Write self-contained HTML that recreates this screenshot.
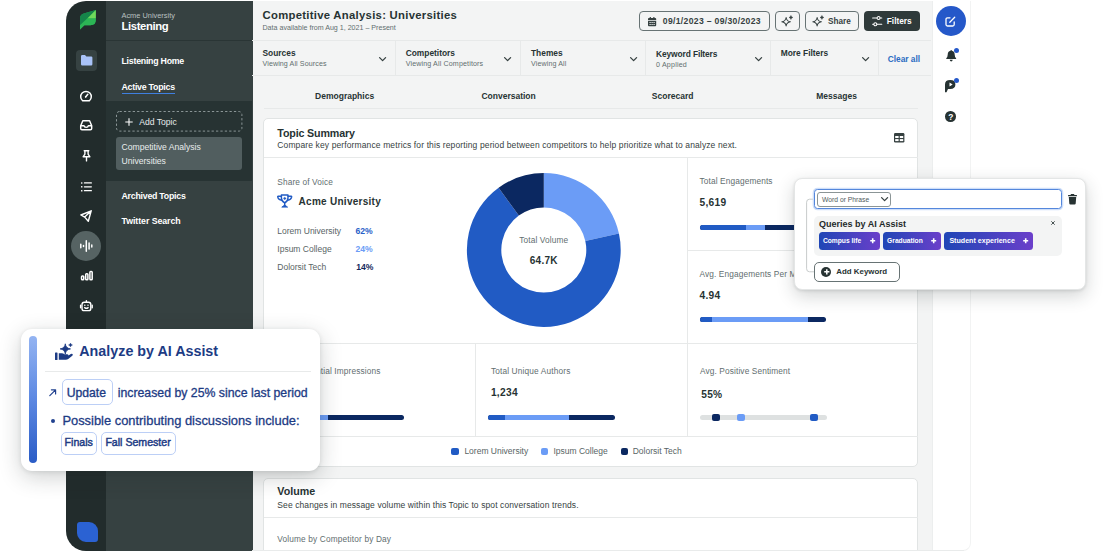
<!DOCTYPE html>
<html lang="en">
<head>
<meta charset="utf-8">
<title>Competitive Analysis: Universities</title>
<style>
*{box-sizing:border-box;margin:0;padding:0}
html,body{width:1120px;height:553px;overflow:hidden;background:#fff}
body{position:relative;font-family:"Liberation Sans",Arial,sans-serif;color:#273333;-webkit-font-smoothing:antialiased}
.a{position:absolute}
.t{position:absolute;white-space:nowrap;line-height:1;transform:translateY(-50%)}
.b{font-weight:700}
.c{transform:translate(-50%,-50%)}
.w{color:#fff}
.g{color:#626e6f;letter-spacing:.12px}
svg{position:absolute;overflow:visible}
.ln{position:absolute;background:#e7e9e9}
.card{position:absolute;background:#fff;border:1px solid #e1e4e4;border-radius:5px}
.bar{position:absolute;height:5px;border-radius:3px;overflow:hidden;background:#0b2861}
.bar i{position:absolute;top:0;bottom:0}
.btn{position:absolute;border:1px solid #677374;border-radius:4px}
.chip{position:absolute;top:232.2px;height:17.8px;border-radius:3.5px;background:linear-gradient(90deg,#1f46b6,#6b3fca)}
.tag{position:absolute;border:1px solid #bccff6;border-radius:5px;background:#fff}
.nv{color:#1d3b84}
</style>
</head>
<body>

<!-- ===== window backgrounds ===== -->
<div class="a" id="rail" style="left:66px;top:1px;width:40.2px;height:550px;background:#222c2c;border-radius:20px 0 0 20px"></div>
<div class="a" id="nav" style="left:106px;top:1px;width:146.7px;height:550px;background:#364141"></div>
<div class="a" id="main" style="left:252.7px;top:1px;width:678.9px;height:550px;background:#f3f4f4"></div>
<div class="a" id="rrail" style="left:931.6px;top:1px;width:39.4px;height:550px;background:#fff;border-left:1px solid #eceeee;border-right:1px solid #f2f3f3;border-bottom:1px solid #f0f1f1;border-radius:0 0 8px 0"></div>

<!-- ===== NAV PANEL ===== -->
<div id="navc">
<div class="a" style="left:106px;top:40px;width:146px;height:1px;background:#2a3535"></div>
<span class="t" style="left:121.5px;top:15.9px;font-size:7.4px;color:#b9c0c0">Acme University</span>
<span class="t b w" style="left:121.5px;top:26.95px;font-size:11.3px;letter-spacing:-.37px">Listening</span>
<span class="t b w" style="left:121.5px;top:61.28px;font-size:8.8px;letter-spacing:-.25px">Listening Home</span>
<span class="t b w" style="left:121.5px;top:86.5px;font-size:8.8px;letter-spacing:-.25px">Active Topics</span>
<div class="a" style="left:121.5px;top:92.6px;width:53.5px;height:1px;background:#3f7fe0"></div>
<div class="a" style="left:106px;top:101.3px;width:146px;height:79.4px;background:#273333"></div>
<svg style="left:116px;top:111.2px" width="126.4" height="20.6"><rect x=".5" y=".5" width="125.4" height="19.6" rx="3" fill="none" stroke="#8a9596" stroke-width="1" stroke-dasharray="2.3 2.1"/></svg>
<svg style="left:125px;top:118px" width="8" height="8" viewBox="0 0 8 8"><path d="M4 .3v7.4M.3 4h7.4" stroke="#fff" stroke-width="1.1" fill="none"/></svg>
<span class="t" style="left:139.2px;top:122.12px;font-size:8.6px;color:#e6eaea">Add Topic</span>
<div class="a" style="left:116px;top:136.7px;width:126.4px;height:33.8px;background:#515e5f;border-radius:3px"></div>
<span class="t" style="left:121.5px;top:147.2px;font-size:8.6px;color:#e9eded">Competitive Analysis</span>
<span class="t" style="left:121.5px;top:161px;font-size:8.6px;color:#e9eded">Universities</span>
<span class="t b w" style="left:121.5px;top:196.2px;font-size:8.8px;letter-spacing:-.25px">Archived Topics</span>
<span class="t b w" style="left:121.5px;top:221.2px;font-size:8.8px;letter-spacing:-.06px">Twitter Search</span>
</div>

<!-- ===== RAIL ICONS ===== -->
<div id="railc">
<!-- sprout leaf logo -->
<svg style="left:79.8px;top:10.4px" width="15.8" height="19.4" viewBox="0 0 158 194">
<path d="M0 85 Q0 40 45 32 L158 0 L158 100 Q158 152 104 152 L44 152 L0 194 Z" fill="#1ea34e"/>
<path d="M0 85 Q0 40 45 32 L158 0 L0 152 Z" fill="#15844a"/>
<path d="M158 0 L158 84 L74 84 Z" fill="#70da5b"/>
<path d="M158 84 L158 100 Q158 152 104 152 L44 152 L0 194 L0 152 L74 84 Z" fill="#2cb555"/>
</svg>
<!-- folder (active) -->
<div class="a" style="left:76px;top:50px;width:20.5px;height:20.5px;border-radius:4px;background:#364242"></div>
<svg style="left:80.6px;top:54.6px" width="11.4" height="10.4" viewBox="0 0 114 104"><path d="M0 12 Q0 0 12 0 H40 L54 14 H102 Q114 14 114 26 V92 Q114 104 102 104 H12 Q0 104 0 92 Z" fill="#a9c3f8"/></svg>
<!-- gauge -->
<svg style="left:80.3px;top:89.9px" width="12" height="11.6" viewBox="0 0 24 23.2" fill="none" stroke="#fff" stroke-width="2.9" stroke-linecap="round" stroke-linejoin="round"><path d="M5.2 21.6 H18.8 A10.6 10.6 0 1 0 5.2 21.6 Z"/><path d="M11.2 13.8 L15.6 8.6" stroke-width="3"/><circle cx="11.4" cy="13.6" r="1.6" fill="#fff" stroke="none"/></svg>
<!-- inbox -->
<svg style="left:80.2px;top:120.2px" width="12.4" height="10.4" viewBox="0 0 24.8 20.8" fill="none" stroke="#fff" stroke-width="2.9" stroke-linejoin="round"><path d="M1.4 11.4 L5.6 1.4 H19.2 L23.4 11.4 V17 Q23.4 19.4 21 19.4 H3.8 Q1.4 19.4 1.4 17 Z"/><path d="M1.4 11.4 H8 Q8.6 14.8 12.4 14.8 Q16.2 14.8 16.8 11.4 H23.4"/></svg>
<!-- pin -->
<svg style="left:81.8px;top:149.6px" width="9" height="11.6" viewBox="0 0 18 23.2" fill="none" stroke="#fff" stroke-width="2.8" stroke-linejoin="round" stroke-linecap="round"><path d="M4.4 1.4 H13.6 M5.8 1.6 V8.4 L2.2 13.6 H15.8 L12.2 8.4 V1.6 M9 13.8 V21.8"/></svg>
<!-- list -->
<svg style="left:80.8px;top:181.6px" width="11" height="9.6" viewBox="0 0 22 19.2" fill="#fff"><rect x="0" y="0.4" width="3" height="3" rx="1"/><rect x="5.6" y="0.6" width="16.4" height="2.6" rx="1.3"/><rect x="0" y="8.1" width="3" height="3" rx="1"/><rect x="5.6" y="8.3" width="16.4" height="2.6" rx="1.3"/><rect x="0" y="15.8" width="3" height="3" rx="1"/><rect x="5.6" y="16" width="16.4" height="2.6" rx="1.3"/></svg>
<!-- send -->
<svg style="left:80.4px;top:210px" width="12" height="12" viewBox="0 0 24 24" fill="none" stroke="#fff" stroke-width="2.8" stroke-linejoin="round" stroke-linecap="round"><path d="M22.4 1.6 L1.8 10 L9.4 14.2 L16.6 22.4 Z M9.4 14.2 L22.4 1.6"/></svg>
<!-- listening (active circle) -->
<div class="a" style="left:71.1px;top:231.1px;width:30.4px;height:30.4px;border-radius:50%;background:#566363"></div>
<svg style="left:80px;top:240.4px" width="12.6" height="12" viewBox="0 0 25.2 24" fill="none" stroke="#fff" stroke-width="3" stroke-linecap="round"><path d="M1.6 8.4 V15.6 M7 11 V13 M12.6 1.6 V22.4 M18.2 6 V18 M23.6 10 V14"/></svg>
<!-- bars -->
<svg style="left:80.6px;top:271px" width="11.8" height="9.4" viewBox="0 0 23.6 18.8" fill="none" stroke="#fff" stroke-width="3" stroke-linejoin="round"><rect x="1.1" y="10" width="4.4" height="7.6" rx="1.6"/><rect x="9.4" y="5.6" width="4.4" height="12" rx="1.6"/><rect x="17.8" y="1.1" width="4.6" height="16.5" rx="1.6"/></svg>
<!-- bot -->
<svg style="left:79.9px;top:300px" width="12.8" height="11.8" viewBox="0 0 25.6 23.6" fill="none" stroke="#fff" stroke-width="2.8" stroke-linejoin="round" stroke-linecap="round"><rect x="4" y="4.6" width="17.6" height="16.6" rx="4.4"/><path d="M12.8 4.4 V1.2 M1.2 10.4 V15.6 M24.4 10.4 V15.6 M9.4 15.2 Q12.8 18 16.2 15.2"/><circle cx="9.6" cy="10.6" r="1.5" fill="#fff" stroke="none"/><circle cx="16" cy="10.6" r="1.5" fill="#fff" stroke="none"/></svg>
<!-- bottom blue leaf -->
<div class="a" style="left:77.4px;top:522px;width:20.6px;height:20.4px;background:#2b62d3;border-radius:3px 9px 3px 9px"></div>
</div>

<!-- ===== MAIN HEADER ===== -->
<div id="hdr">
<span class="t b" style="left:262.5px;top:16.2px;font-size:11.3px;letter-spacing:.29px">Competitive Analysis: Universities</span>
<span class="t g" style="left:262.5px;top:28.9px;font-size:7.1px;letter-spacing:0">Data available from Aug 1, 2021 – Present</span>
<!-- date button -->
<div class="btn" style="left:639.3px;top:11.3px;width:130.5px;height:20px"></div>
<svg style="left:648.3px;top:16.6px" width="8.2" height="9.2" viewBox="0 0 16.4 18.4" fill="#364141"><path d="M3.4 0 h2.4 v2.2 h4.8 V0 h2.4 v2.2 h1.6 q1.8 0 1.8 1.8 V6 H0 V4 q0 -1.8 1.8 -1.8 h1.6 Z M0 7.6 h16.4 v9 q0 1.8 -1.8 1.8 H1.8 q-1.8 0 -1.8 -1.8 Z M3 10 v2.2 h2.4 V10 Z M7 10 v2.2 h2.4 V10 Z M11 10 v2.2 h2.4 V10 Z M3 13.8 v2.2 h2.4 v-2.2 Z M7 13.8 v2.2 h2.4 v-2.2 Z M11 13.8 v2.2 h2.4 v-2.2 Z" fill-rule="evenodd"/></svg>
<span class="t b" style="left:662.8px;top:20.6px;font-size:8.6px;color:#364141;letter-spacing:.33px">09/1/2023 – 09/30/2023</span>
<!-- sparkle button -->
<div class="btn" style="left:774.9px;top:11.3px;width:24.8px;height:20px"></div>
<svg class="spk" style="left:781.2px;top:15px" width="12.4" height="12.4" viewBox="0 0 23.2 23.2" fill="none" stroke="#364141" stroke-width="1.9" stroke-linejoin="round"><path d="M9.6 4.6 Q10.6 11.6 17.6 12.6 Q10.6 13.6 9.6 20.6 Q8.6 13.6 1.6 12.6 Q8.6 11.6 9.6 4.6 Z"/><path d="M18.6 1 Q19 4.2 22.2 4.6 Q19 5 18.6 8.2 Q18.2 5 15 4.6 Q18.2 4.2 18.6 1 Z" fill="#364141" stroke-width="1"/></svg>
<!-- share button -->
<div class="btn" style="left:805.1px;top:11.3px;width:53.7px;height:20px"></div>
<svg class="spk" style="left:811.8px;top:15px" width="12.4" height="12.4" viewBox="0 0 23.2 23.2" fill="none" stroke="#364141" stroke-width="1.9" stroke-linejoin="round"><path d="M9.6 4.6 Q10.6 11.6 17.6 12.6 Q10.6 13.6 9.6 20.6 Q8.6 13.6 1.6 12.6 Q8.6 11.6 9.6 4.6 Z"/><path d="M18.6 1 Q19 4.2 22.2 4.6 Q19 5 18.6 8.2 Q18.2 5 15 4.6 Q18.2 4.2 18.6 1 Z" fill="#364141" stroke-width="1"/></svg>
<span class="t b" style="left:828px;top:22.16px;font-size:8.2px;color:#364141">Share</span>
<!-- filters button -->
<div class="a" style="left:864.3px;top:11.3px;width:56.2px;height:20px;border-radius:4px;background:#2f3a3a"></div>
<svg style="left:871.8px;top:15.8px" width="10.4" height="10.4" viewBox="0 0 20.8 20.8" fill="none" stroke="#fff" stroke-width="2.1" stroke-linecap="round"><path d="M1.2 4.2 H9.6 M16.6 4.2 H19.6 M1.2 16.6 H3.2 M10.2 16.6 H19.6"/><circle cx="13.1" cy="4.2" r="3"/><circle cx="6.7" cy="16.6" r="3"/></svg>
<span class="t b w" style="left:886.8px;top:21.2px;font-size:8.3px">Filters</span>
</div>

<!-- ===== FILTER ROW + TABS ===== -->
<div id="filters">
<div class="ln" style="left:252px;top:40.4px;width:679px;height:1px"></div>
<div class="ln" style="left:252px;top:75.4px;width:679px;height:1px"></div>
<div class="ln" style="left:395.2px;top:41px;width:1px;height:35px"></div>
<div class="ln" style="left:520.2px;top:41px;width:1px;height:35px"></div>
<div class="ln" style="left:645.2px;top:41px;width:1px;height:35px"></div>
<div class="ln" style="left:770.2px;top:41px;width:1px;height:35px"></div>
<div class="ln" style="left:878px;top:41px;width:1px;height:35px"></div>
<span class="t b" style="left:262.5px;top:53.4px;font-size:8.4px">Sources</span>
<span class="t g" style="left:262.5px;top:65.2px;font-size:7.1px;letter-spacing:0.1px">Viewing All Sources</span>
<svg style="left:379.29999999999995px;top:56.9px" width="7.2" height="4.2" viewBox="0 0 7.2 4.2" fill="none" stroke="#364141" stroke-width="1.3" stroke-linecap="round" stroke-linejoin="round"><path d="M.6 .6 L3.6 3.6 L6.6 .6"/></svg>
<span class="t b" style="left:405.7px;top:53.4px;font-size:8.4px">Competitors</span>
<span class="t g" style="left:405.7px;top:65.25px;font-size:7.1px;letter-spacing:0.14px">Viewing All Competitors</span>
<svg style="left:504.29999999999995px;top:56.9px" width="7.2" height="4.2" viewBox="0 0 7.2 4.2" fill="none" stroke="#364141" stroke-width="1.3" stroke-linecap="round" stroke-linejoin="round"><path d="M.6 .6 L3.6 3.6 L6.6 .6"/></svg>
<span class="t b" style="left:531px;top:53.36px;font-size:8.4px">Themes</span>
<span class="t g" style="left:531px;top:65.21px;font-size:7.1px;letter-spacing:0.12px">Viewing All</span>
<svg style="left:629.6px;top:56.9px" width="7.2" height="4.2" viewBox="0 0 7.2 4.2" fill="none" stroke="#364141" stroke-width="1.3" stroke-linecap="round" stroke-linejoin="round"><path d="M.6 .6 L3.6 3.6 L6.6 .6"/></svg>
<span class="t b" style="left:656px;top:54.12px;font-size:8.4px;letter-spacing:-0.1px">Keyword Filters</span>
<span class="t g" style="left:656px;top:65.83px;font-size:7.1px;letter-spacing:0.2px">0 Applied</span>
<svg style="left:754.6px;top:56.9px" width="7.2" height="4.2" viewBox="0 0 7.2 4.2" fill="none" stroke="#364141" stroke-width="1.3" stroke-linecap="round" stroke-linejoin="round"><path d="M.6 .6 L3.6 3.6 L6.6 .6"/></svg>
<span class="t b" style="left:780.7px;top:53.2px;font-size:8.4px">More Filters</span>
<svg style="left:862.0px;top:56.9px" width="7.2" height="4.2" viewBox="0 0 7.2 4.2" fill="none" stroke="#364141" stroke-width="1.3" stroke-linecap="round" stroke-linejoin="round"><path d="M.6 .6 L3.6 3.6 L6.6 .6"/></svg>
<span class="t b" style="left:887.8px;top:58.95px;font-size:8.3px;color:#2a6bc2">Clear all</span>
<!-- tabs -->
<span class="t b c" style="left:344.6px;top:95.76px;font-size:8.5px">Demographics</span>
<span class="t b c" style="left:508.6px;top:95.76px;font-size:8.5px">Conversation</span>
<span class="t b c" style="left:672.6px;top:95.76px;font-size:8.5px">Scorecard</span>
<span class="t b c" style="left:836.6px;top:95.76px;font-size:8.5px">Messages</span>
<div class="ln" style="left:264px;top:107.8px;width:654px;height:1px"></div>
</div>

<!-- ===== TOPIC SUMMARY CARD ===== -->
<div id="summary">
<div class="card" style="left:262.8px;top:117.8px;width:655.4px;height:349px"></div>
<span class="t b" style="left:277.3px;top:132.8px;font-size:10.7px;letter-spacing:-0.15px">Topic Summary</span>
<span class="t" style="left:277.3px;top:144.86px;font-size:8.5px;color:#364141;letter-spacing:0.12px">Compare key performance metrics for this reporting period between competitors to help prioritize what to analyze next.</span>
<!-- table icon -->
<svg style="left:894px;top:133.4px" width="10.4" height="9.4" viewBox="0 0 20.8 18.8"><rect x="0" y="0" width="20.8" height="18.8" rx="2.4" fill="#364141"/><rect x="2.4" y="6" width="6.8" height="4" fill="#fff"/><rect x="11.6" y="6" width="6.8" height="4" fill="#fff"/><rect x="2.4" y="12.2" width="6.8" height="4" fill="#fff"/><rect x="11.6" y="12.2" width="6.8" height="4" fill="#fff"/></svg>
<div class="ln" style="left:263.5px;top:156.9px;width:654px;height:1px"></div>
<div class="ln" style="left:686.8px;top:158px;width:1px;height:278.5px"></div>
<div class="ln" style="left:688px;top:250px;width:230px;height:1px"></div>
<div class="ln" style="left:263.5px;top:342.5px;width:654px;height:1px"></div>
<div class="ln" style="left:474.5px;top:343.5px;width:1px;height:92.5px"></div>
<div class="ln" style="left:263.5px;top:435.8px;width:654px;height:1px"></div>
<!-- share of voice -->
<span class="t g" style="left:277.3px;top:181.84px;font-size:8.3px">Share of Voice</span>
<svg style="left:277.3px;top:194.2px" width="15.4" height="13.8" viewBox="0 0 30.8 27.6" fill="none" stroke="#215bc4" stroke-width="2.9" stroke-linejoin="round" stroke-linecap="round"><path d="M8.8 1.8 H22 V8 Q22 14.4 15.4 17.8 Q8.8 14.4 8.8 8 Z"/><path d="M8.4 4.4 H2.2 Q1.2 4.4 1.6 6.4 Q2.8 11.6 9.4 12.6 M22.4 4.4 H28.6 Q29.6 4.4 29.2 6.4 Q28 11.6 21.4 12.6 M15.4 18 V23"/><path d="M10.2 25.8 L15.4 22 L20.6 25.8 Z" fill="#215bc4" stroke-width="1.8"/><circle cx="15.4" cy="8.8" r="2" fill="#215bc4" stroke-width="1.2"/></svg>
<span class="t b" style="left:298.6px;top:202.3px;font-size:10px;letter-spacing:.27px">Acme University</span>
<span class="t" style="left:277.3px;top:231.1px;font-size:8.5px;color:#586465">Lorem University</span>
<span class="t b" style="left:355.5px;top:230.72px;font-size:8.6px;color:#2a5fc8">62%</span>
<span class="t" style="left:277.3px;top:249.4px;font-size:8.5px;color:#586465">Ipsum College</span>
<span class="t b" style="left:355.5px;top:248.85px;font-size:8.6px;color:#6b9cf6">24%</span>
<span class="t" style="left:277.3px;top:267.02px;font-size:8.5px;color:#586465">Dolorsit Tech</span>
<span class="t b" style="left:356.2px;top:267.3px;font-size:8.6px;color:#14295c">14%</span>
<!-- donut -->
<svg style="left:0;top:0" width="1120" height="553" viewBox="0 0 1120 553"><path d="M543.80 173.10 A76.9 76.9 0 0 1 618.93 233.62 L585.32 240.95 A42.5 42.5 0 0 0 543.80 207.50 Z" fill="#6b9cf6"/><path d="M618.93 233.62 A76.9 76.9 0 1 1 498.60 187.79 L518.82 215.62 A42.5 42.5 0 1 0 585.32 240.95 Z" fill="#215bc4"/><path d="M498.60 187.79 A76.9 76.9 0 0 1 543.80 173.10 L543.80 207.50 A42.5 42.5 0 0 0 518.82 215.62 Z" fill="#0b2861"/></svg>
<span class="t c g" style="left:543.8px;top:239.7px;font-size:8.3px">Total Volume</span>
<span class="t b c" style="left:543.8px;top:260.54px;font-size:10px;letter-spacing:.3px">64.7K</span>
<!-- right column -->
<span class="t g" style="left:699.5px;top:181.49px;font-size:8.3px">Total Engagements</span>
<span class="t b" style="left:699.5px;top:202.97px;font-size:10.2px;letter-spacing:.3px">5,619</span>
<div class="bar" style="left:699.5px;top:224.79999999999998px;width:126.7px"><i style="left:0.0px;width:46.9px;background:#215bc4"></i><i style="left:46.9px;width:19.1px;background:#6b9cf6"></i></div>
<span class="t g" style="left:699.5px;top:274.4px;font-size:8.3px">Avg. Engagements Per Message</span>
<span class="t b" style="left:699.5px;top:295.94px;font-size:10.2px;letter-spacing:.3px">4.94</span>
<div class="bar" style="left:699.5px;top:317.20000000000005px;width:126.7px"><i style="left:0.0px;width:12.2px;background:#215bc4"></i><i style="left:12.2px;width:96.3px;background:#6b9cf6"></i></div>
<!-- bottom row -->
<span class="t g" style="right:739.6px;top:371.23px;font-size:8.3px">Total Potential Impressions</span>
<span class="t b" style="left:277.3px;top:388.59px;font-size:10.2px;letter-spacing:.3px">9.8M</span>
<div class="bar" style="left:277.3px;top:415.20000000000005px;width:127.1px"><i style="left:0.0px;width:22.7px;background:#215bc4"></i><i style="left:22.7px;width:28.0px;background:#6b9cf6"></i></div>
<span class="t g" style="left:490.9px;top:371.18px;font-size:8.3px;letter-spacing:0.15px">Total Unique Authors</span>
<span class="t b" style="left:490.9px;top:393.25px;font-size:10.2px;letter-spacing:.3px">1,234</span>
<div class="bar" style="left:487.9px;top:415.20000000000005px;width:127.3px"><i style="left:0.0px;width:17.1px;background:#215bc4"></i><i style="left:17.1px;width:64.3px;background:#6b9cf6"></i></div>
<span class="t g" style="left:700px;top:371.14px;font-size:8.3px">Avg. Positive Sentiment</span>
<span class="t b" style="left:701.2px;top:395.02px;font-size:10.2px;letter-spacing:.3px">55%</span>
<div class="a" style="left:700px;top:415.2px;width:126.5px;height:5px;border-radius:3px;background:#dee1e1"></div>
<div class="a" style="left:712.1px;top:413.8px;width:7.6px;height:7.6px;border-radius:2px;background:#0b2861"></div>
<div class="a" style="left:737px;top:413.8px;width:7.6px;height:7.6px;border-radius:2px;background:#6b9cf6"></div>
<div class="a" style="left:810.2px;top:413.8px;width:7.6px;height:7.6px;border-radius:2px;background:#215bc4"></div>
<!-- legend -->
<div class="a" style="left:451.4px;top:448.3px;width:7.2px;height:7.2px;border-radius:2px;background:#215bc4"></div>
<span class="t" style="left:464.4px;top:451.4px;font-size:8.5px;color:#586465">Lorem University</span>
<div class="a" style="left:541.3px;top:448.3px;width:7.2px;height:7.2px;border-radius:2px;background:#6b9cf6"></div>
<span class="t" style="left:553.4px;top:451.4px;font-size:8.5px;color:#586465">Ipsum College</span>
<div class="a" style="left:620.6px;top:448.3px;width:7.2px;height:7.2px;border-radius:2px;background:#0b2861"></div>
<span class="t" style="left:632.7px;top:451.4px;font-size:8.5px;color:#586465">Dolorsit Tech</span>
</div>

<!-- ===== VOLUME CARD ===== -->
<div id="volume">
<div class="card" style="left:262.8px;top:477.6px;width:655.4px;height:90px;border-radius:5px 5px 0 0"></div>
<span class="t b" style="left:277.3px;top:490.95px;font-size:10.7px">Volume</span>
<span class="t" style="left:277.3px;top:504.86px;font-size:8.5px;color:#364141;letter-spacing:0.1px">See changes in message volume within this Topic to spot conversation trends.</span>
<div class="ln" style="left:263.5px;top:516.6px;width:654px;height:1px"></div>
<span class="t g" style="left:277.3px;top:538.86px;font-size:8.3px;letter-spacing:0.15px">Volume by Competitor by Day</span>
<div class="a" style="left:252px;top:551px;width:680px;height:2px;background:#fff"></div>
<div class="a" style="left:252px;top:550.4px;width:712px;height:1px;background:#e9ebeb"></div>
</div>

<!-- ===== RIGHT RAIL ===== -->
<div id="rr">
<div class="a" style="left:935.6px;top:5.8px;width:30.4px;height:30.4px;border-radius:50%;background:#2558c9"></div>
<svg style="left:945.2px;top:15.6px" width="11" height="11" viewBox="0 0 22 22" fill="none" stroke="#fff" stroke-width="2.6" stroke-linecap="round" stroke-linejoin="round"><path d="M10 3.6 H5 Q2 3.6 2 6.6 V17 Q2 20 5 20 H15.4 Q18.4 20 18.4 17 V12"/><path d="M9.6 12.6 L19.4 2.6"/></svg>
<!-- bell -->
<svg style="left:945.6px;top:50.4px" width="10.4" height="11.4" viewBox="0 0 20.8 22.8" fill="#273333"><path d="M10.4 0 Q11.8 0 11.8 1.6 Q17.4 2.8 17.4 9.4 Q17.4 14 20.4 16.4 Q20.8 18 19.4 18 H1.4 Q0 18 .4 16.4 Q3.4 14 3.4 9.4 Q3.4 2.8 9 1.6 Q9 0 10.4 0 Z"/><path d="M7.4 19.6 H13.4 Q13 22.8 10.4 22.8 Q7.8 22.8 7.4 19.6 Z"/></svg>
<div class="a" style="left:953.8px;top:47.9px;width:5.2px;height:5.2px;border-radius:50%;background:#2558c9"></div>
<!-- chat -->
<svg style="left:945.2px;top:80.4px" width="11.4" height="12.4" viewBox="0 0 22.8 24.8" fill="#273333"><path d="M10.4 0 Q20.8 0 20.8 9 Q20.8 18 10.4 18 H6 L3 24.4 H0 V9 Q0 0 10.4 0 Z M9 5 V13 L15.4 9 Z" fill-rule="evenodd"/></svg>
<div class="a" style="left:953.8px;top:78px;width:5.2px;height:5.2px;border-radius:50%;background:#2558c9"></div>
<!-- help -->
<div class="a" style="left:945.4px;top:111.2px;width:10.6px;height:10.6px;border-radius:50%;background:#273333"></div>
<span class="t b c w" style="left:950.7px;top:116.9px;font-size:8.4px">?</span>
</div>

<!-- ===== KEYWORD POPUP ===== -->
<div id="popup">
<div class="a" style="left:793.8px;top:178.4px;width:292.6px;height:111.6px;background:#fff;border-radius:8px;border:1px solid #e4e6e6;box-shadow:0 6px 18px rgba(30,40,40,.20),0 1px 3px rgba(30,40,40,.12)"></div>
<!-- tree line -->
<svg style="left:0;top:0" width="1120" height="553" fill="none" stroke="#c8cccc" stroke-width="1"><path d="M814.3 199.2 H809.6 Q806.6 199.2 806.6 202.2 V268.8 Q806.6 271.8 809.6 271.8 H814.3"/></svg>
<!-- input -->
<div class="a" style="left:814.3px;top:189.4px;width:248px;height:19.8px;border:1.2px solid #5487dc;border-radius:3.5px;background:#fff;box-shadow:0 0 0 1.3px #cfdff9"></div>
<div class="a" style="left:817.1px;top:192.1px;width:74.3px;height:14.6px;border:1px solid #8b9596;border-radius:3px;background:#fff"></div>
<span class="t" style="left:822px;top:199.6px;font-size:6.75px;color:#4f5b5c">Word or Phrase</span>
<svg style="left:881.3px;top:197.4px" width="7.2" height="4.2" viewBox="0 0 7.2 4.2" fill="none" stroke="#364141" stroke-width="1.3" stroke-linecap="round" stroke-linejoin="round"><path d="M.6 .6 L3.6 3.6 L6.6 .6"/></svg>
<!-- trash -->
<svg style="left:1068.4px;top:194px" width="9" height="10.4" viewBox="0 0 18 20.8" fill="#273333"><path d="M6 0 H12 L13 2 H17 Q18 2 18 3 V4.4 H0 V3 Q0 2 1 2 H5 Z M1.6 6 H16.4 L15.4 18.8 Q15.2 20.8 13.2 20.8 H4.8 Q2.8 20.8 2.6 18.8 Z"/></svg>
<!-- queries box -->
<div class="a" style="left:814.3px;top:215.5px;width:248px;height:40px;border-radius:5px;background:#f3f4f4"></div>
<span class="t b" style="left:819.1px;top:224.4px;font-size:9px;color:#1f2a2a">Queries by AI Assist</span>
<svg style="left:1051.4px;top:220.6px" width="4" height="4" viewBox="0 0 4 4"><path d="M.3 .3 L3.7 3.7 M3.7 .3 L.3 3.7" stroke="#364141" stroke-width=".9" fill="none"/></svg>
<div class="chip" style="left:819.1px;width:60.9px"></div>
<span class="t b w" style="left:822.9px;top:241.28px;font-size:6.7px">Compus life</span><svg style="left:869.6999999999999px;top:238.1px" width="5.4" height="5.4" viewBox="0 0 5.2 5.2"><path d="M2.6 .2v4.8M.2 2.6h4.8" stroke="#fff" stroke-width="1.5" fill="none"/></svg>
<div class="chip" style="left:883.4px;width:57.5px"></div>
<span class="t b w" style="left:887.1px;top:240.88px;font-size:6.7px">Graduation</span><svg style="left:930.8px;top:238.1px" width="5.4" height="5.4" viewBox="0 0 5.2 5.2"><path d="M2.6 .2v4.8M.2 2.6h4.8" stroke="#fff" stroke-width="1.5" fill="none"/></svg>
<div class="chip" style="left:944.3px;width:88.3px"></div>
<span class="t b w" style="left:949.4px;top:242.34px;font-size:7.1px">Student experience</span><svg style="left:1022.4999999999999px;top:238.1px" width="5.4" height="5.4" viewBox="0 0 5.2 5.2"><path d="M2.6 .2v4.8M.2 2.6h4.8" stroke="#fff" stroke-width="1.5" fill="none"/></svg>
<!-- add keyword -->
<div class="btn" style="left:814.3px;top:262.4px;width:85.6px;height:19.6px;background:#fff;border-radius:5px"></div>
<div class="a" style="left:821.3px;top:266.9px;width:10px;height:10px;border-radius:50%;background:#273333"></div>
<svg style="left:823.5px;top:269.1px" width="5.6" height="5.6" viewBox="0 0 5.6 5.6"><path d="M2.8 .2v5.2M.2 2.8h5.2" stroke="#fff" stroke-width="1.5" fill="none"/></svg>
<span class="t b" style="left:836.3px;top:272px;font-size:7.9px;color:#273333">Add Keyword</span>
</div>

<!-- ===== AI ASSIST CARD ===== -->
<div id="ai">
<div class="a" style="left:21px;top:328.6px;width:298.8px;height:142px;background:#fff;border-radius:11px;box-shadow:0 6px 22px rgba(30,40,40,.22),0 1px 4px rgba(30,40,40,.10)"></div>
<div class="a" style="left:28.6px;top:336px;width:8.3px;height:127px;border-radius:4.2px;background:linear-gradient(180deg,#94b4f2 0%,#5c88e2 50%,#2a5cc6 100%)"></div>
<!-- hand + sparkle icon -->
<svg style="left:54.6px;top:343.4px" width="17.8" height="17.6" viewBox="0 0 35.6 35.2" fill="#1d3b84"><rect x="0" y="19" width="5" height="15" rx="1.2"/><path d="M7.6 20.6 H13.6 Q16.6 20.6 18.8 22.6 H24 Q27 22.6 27 25 L31.6 22 Q34.6 20.4 35.6 23 Q36 24.8 34 26.2 L26.4 32 Q24.4 33.6 21.6 33.6 H7.6 Z"/><path d="M20.6 1.6 Q21.6 10.6 31 11.8 Q21.6 13 20.6 22 Q19.6 13 10.2 11.8 Q19.6 10.6 20.6 1.6 Z" stroke="#1d3b84" stroke-width="1.6" stroke-linejoin="round"/><path d="M31 0 Q31.5 3.4 35 4 Q31.5 4.6 31 8 Q30.5 4.6 27 4 Q30.5 3.4 31 0 Z" stroke="#1d3b84" stroke-width=".8"/></svg>
<span class="t b nv" style="left:79.3px;top:351.3px;font-size:14.3px">Analyze by AI Assist</span>
<div class="a" style="left:44.6px;top:371px;width:266px;height:1px;background:#e8eaea"></div>
<!-- arrow -->
<svg style="left:48.6px;top:389.4px" width="7.4" height="7.4" viewBox="0 0 7.4 7.4" fill="none" stroke="#21418f" stroke-width="1.2" stroke-linecap="round" stroke-linejoin="round"><path d="M.8 6.6 L6.6 .8 M2.4 .8 H6.6 V5"/></svg>
<div class="tag" style="left:61.5px;top:379.3px;width:51.3px;height:26.2px"></div>
<span class="t nv" style="left:66.7px;top:392.68px;font-size:12.2px;-webkit-text-stroke:.35px #1d3b84">Update</span>
<span class="t nv" style="left:117.7px;top:393.08px;font-size:12.3px;-webkit-text-stroke:.3px #1d3b84">increased by 25% since last period</span>
<div class="a" style="left:51.2px;top:418.6px;width:4px;height:4px;border-radius:50%;background:#21418f"></div>
<span class="t nv" style="left:62.4px;top:421.2px;font-size:12.9px;-webkit-text-stroke:.3px #1d3b84">Possible contributing discussions include:</span>
<div class="tag" style="left:60.6px;top:431.6px;width:36.5px;height:23px"></div>
<span class="t nv" style="left:64.6px;top:442.2px;font-size:10.6px;-webkit-text-stroke:.45px #1d3b84">Finals</span>
<div class="tag" style="left:101.4px;top:431.6px;width:74.6px;height:23px"></div>
<span class="t nv" style="left:105.4px;top:442.0px;font-size:10.6px;-webkit-text-stroke:.45px #1d3b84">Fall Semester</span>
</div>

</body>
</html>
